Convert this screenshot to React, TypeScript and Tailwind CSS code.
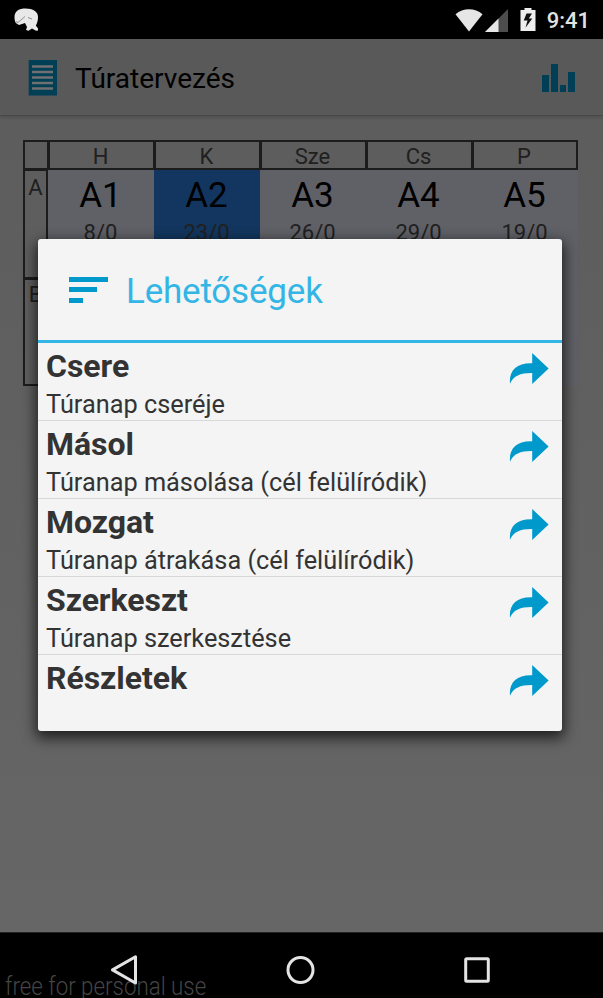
import React from 'react';

interface Option {
  title: string;
  description?: string;
}

interface Tour {
  name: string;
  count: string;
  selected?: boolean;
}

const days = ['H', 'K', 'Sze', 'Cs', 'P'];

const tours: Tour[] = [
  { name: 'A1', count: '8/0' },
  { name: 'A2', count: '23/0', selected: true },
  { name: 'A3', count: '26/0' },
  { name: 'A4', count: '29/0' },
  { name: 'A5', count: '19/0' },
];

const options: Option[] = [
  { title: 'Csere', description: 'Túranap cseréje' },
  { title: 'Másol', description: 'Túranap másolása (cél felülíródik)' },
  { title: 'Mozgat', description: 'Túranap átrakása (cél felülíródik)' },
  { title: 'Szerkeszt', description: 'Túranap szerkesztése' },
  { title: 'Részletek' },
];

const ShareArrow: React.FC = () => (
  <svg className="mt-[10px] mr-[13px] h-8 w-10 shrink-0" viewBox="0 0 40 32" aria-hidden="true">
    <path
      d="M23.2 0L39.6 15.5L23.2 31V20C12 19.8 4.5 22.5 1 30.8C-.2 17.5 7.5 9.7 23.2 10.2Z"
      fill="#0099cc"
    />
  </svg>
);

const StatusBar: React.FC = () => (
  <header className="flex h-[39px] shrink-0 items-center bg-black pr-[13px] pl-[14px]">
    <svg className="mt-px h-6 w-6" viewBox="0 0 24 24" aria-hidden="true">
      <path
        d="M.5 9C.5 3 5 .5 11.5 .5C19 .5 24 3.5 24 9C24 13 23 15.5 21.8 17.5L24 20.5V22.5L22 22.8L18 20.5L14.5 22.8L12 22L13 19L11 15L5 17L1.8 15C1 13.5 .5 12 .5 9Z"
        fill="#e8e8e8"
      />
      <path d="M2 13.5L4 14.5L11 8.5M14 9.5L18 11" fill="none" stroke="#555" strokeWidth=".6" />
    </svg>
    <div className="ml-auto flex items-center">
      <svg className="mt-px h-[23px] w-7" viewBox="0 0 28 23" aria-hidden="true">
        <path d="M.5 5.3C8-1.3 20-1.3 27.5 5.3L14 22.5Z" fill="#e6e6e6" />
      </svg>
      <svg className="mt-px ml-[2px] h-[23px] w-[23px]" viewBox="0 0 23 23" aria-hidden="true">
        <path d="M0 23L23 0V23Z" fill="#4d4d4d" />
        <path d="M0 23L13.5 9.5V23Z" fill="#e6e6e6" />
      </svg>
      <svg className="ml-[12px] h-[23px] w-4" viewBox="0 0 16 23" aria-hidden="true">
        <path d="M.5 2H4.5V0H11.5V2H15.5V23H.5Z" fill="#eee" />
        <path d="M6.5 5.5L3.7 12.5H7.5L5.5 19.8L12.3 10.5H8.8L12 5.5Z" fill="#111" />
      </svg>
      <span className="mt-[2px] ml-[11px] text-[22px] leading-none font-medium text-[#e2e2e2]">9:41</span>
    </div>
  </header>
);

const AppBar: React.FC = () => (
  <div className="flex h-[77px] shrink-0 items-center border-b border-[#484848] bg-[#595959] pr-7 pl-[28px] shadow-[0_1px_4px_rgba(0,0,0,0.2)]">
    <svg className="mt-px h-[36px] w-[29px]" viewBox="0 0 29 36" aria-hidden="true">
      <path d="M.7 0H29V35.5H.7Z" fill="#003f56" />
      <path d="M4 6.5H25M4 12H25M4 17.5H25M4 23H25M4 28.5H25" stroke="#707070" strokeWidth="2.4" />
    </svg>
    <h1 className="mt-[3px] ml-[18px] text-[28px] leading-none text-black">Túratervezés</h1>
    <svg className="mt-[2px] ml-auto h-7 w-[33px]" viewBox="0 0 33 28" aria-hidden="true">
      <path d="M0 11H7V28H0ZM9 0H16V28H9ZM18 21H24V28H18ZM26 8H33V28H26Z" fill="#003f56" />
    </svg>
  </div>
);

const Schedule: React.FC = () => (
  <div className="mt-[24px] ml-[23px] grid w-[555px] grid-cols-[25px_repeat(5,106px)] grid-rows-[30px_108px_108px] text-[22px] leading-none text-[#202020]">
    <div className="-mr-px border-2 border-[#1c1c1c]" />
    {days.map((day, i) => (
      <div
        key={day}
        className={`flex items-center justify-center border-2 border-[#1c1c1c] pt-[3px] pr-[2px] ${i < 4 ? '-mr-px' : ''}`}
      >
        {day}
      </div>
    ))}
    <div className="-mt-px -mb-px border-2 border-[#1c1c1c] pt-[6px] text-center">A</div>
    {tours.map((tour) => (
      <div
        key={tour.name}
        className={`flex flex-col items-center pt-[8px] pr-px ${tour.selected ? 'bg-[#12365f]' : 'bg-[#606167]'}`}
      >
        <span className="text-[35px] leading-9 text-black">{tour.name}</span>
        <span className="mt-[8px]">{tour.count}</span>
      </div>
    ))}
    <div className="border-2 border-[#1c1c1c] pt-[4px] text-center">B</div>
    <div className="col-span-5 bg-[#606167]" />
  </div>
);

const OptionsDialog: React.FC = () => (
  <section
    className="absolute top-[239px] left-[38px] flex h-[492px] w-[524px] flex-col overflow-hidden rounded-[3px] bg-[#f4f4f4] shadow-[0_5px_14px_2px_rgba(0,0,0,0.7)]"
    role="dialog"
    aria-label="Lehetőségek"
  >
    <div className="flex h-[104px] shrink-0 items-center border-b-[3px] border-[#33b5e5] pl-[31px]">
      <svg className="h-[26px] w-[39px]" viewBox="0 0 39 26" aria-hidden="true">
        <path d="M0 0H39V5H0ZM0 10H28V15H0ZM0 21H14V26H0Z" fill="#0099cc" />
      </svg>
      <h2 className="mt-1 ml-[18px] text-[35px] leading-none tracking-[-0.2px] text-[#33b5e5]">Lehetőségek</h2>
    </div>
    <ul>
      {options.map((option) => (
        <li
          key={option.title}
          className="flex h-[78px] justify-between border-b border-[#d8d8d8] pl-2 text-[#333]"
        >
          <div>
            <h3 className="pt-[4px] text-[32px] leading-[38px] font-bold tracking-[-0.05px]">{option.title}</h3>
            <p className="pt-[4px] text-[25.3px] leading-[32px]">{option.description}</p>
          </div>
          <ShareArrow />
        </li>
      ))}
    </ul>
  </section>
);

const NavigationBar: React.FC = () => (
  <footer className="relative h-[66px] shrink-0 border-t border-[#222] bg-black">
    <span className="absolute top-[41px] left-[5px] origin-left scale-x-[0.893] text-[25px] leading-[25px] font-light whitespace-nowrap text-[#444]">
      free for personal use
    </span>
    <div className="relative flex h-full items-center pt-[9px] pl-[110px]">
      <svg className="h-[30px] w-7" viewBox="0 0 28 30" fill="none" stroke="#e4e4e4" strokeWidth="3" strokeLinejoin="round" aria-hidden="true">
        <path d="M25.5 1.8V28L2.5 14.9Z" />
      </svg>
      <svg className="ml-[148px] h-[30px] w-[30px]" viewBox="0 0 30 30" fill="none" stroke="#e4e4e4" strokeWidth="3" aria-hidden="true">
        <circle cx="14.5" cy="15" r="12.5" />
      </svg>
      <svg className="ml-[148px] h-[26px] w-[26px]" viewBox="0 0 26 26" fill="none" stroke="#e4e4e4" strokeWidth="3" aria-hidden="true">
        <rect x="1.7" y="1.7" width="22.6" height="22.6" rx="1" />
      </svg>
    </div>
  </footer>
);

export default function App() {
  return (
    <div className="relative flex h-[998px] w-[603px] flex-col overflow-hidden font-['Roboto',sans-serif]">
      <StatusBar />
      <main className="flex min-h-0 flex-1 flex-col bg-linear-to-b from-[#5c5c5c] to-[#666666]">
        <AppBar />
        <Schedule />
      </main>
      <NavigationBar />
      <OptionsDialog />
    </div>
  );
}
